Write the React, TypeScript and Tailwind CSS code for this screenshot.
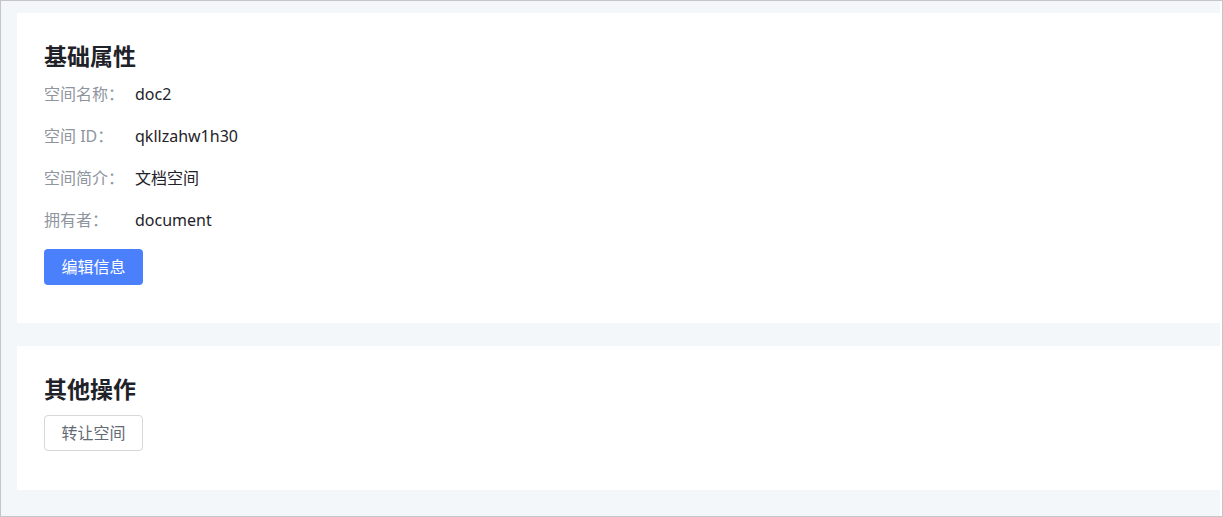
import React from "react";

type Row = { label: string; value: string };

const rows: Row[] = [
  { label: "空间名称：", value: "doc2" },
  { label: "空间 ID：", value: "qkllzahw1h30" },
  { label: "空间简介：", value: "文档空间" },
  { label: "拥有者：", value: "document" },
];

const FONT = { fontFamily: '"Noto Sans", "Noto Sans CJK SC", sans-serif' };

export default function App() {
  return (
    <div
      className="w-[1223px] h-[517px] border border-[#c6c6c6] bg-white flex overflow-hidden"
      style={FONT}
    >
      <div className="flex-1 bg-[#f4f7fa] pl-[16px] pt-[12px] flex flex-col gap-[23px]">
        {/* 基础属性 */}
        <section className="bg-white h-[310px] pl-[27px] pt-[28px]">
          <h2 className="text-[23px] leading-[30px] font-bold text-[#1f2329]">基础属性</h2>
          <div className="mt-[2px]">
            {rows.map((r) => (
              <div key={r.label} className="h-[42px] flex items-center text-[16px]">
                <span className="w-[91px] text-[#8f959e]">{r.label}</span>
                <span className="text-[#1f2329]">{r.value}</span>
              </div>
            ))}
          </div>
          <button className="mt-[8px] w-[99px] h-[36px] rounded-[4px] bg-[#4b80fd] text-white text-[16px]">
            编辑信息
          </button>
        </section>

        {/* 其他操作 */}
        <section className="bg-white h-[144px] pl-[27px] pt-[28px]">
          <h2 className="text-[23px] leading-[30px] font-bold text-[#1f2329]">其他操作</h2>
          <button className="mt-[11px] w-[99px] h-[36px] rounded-[4px] border border-[#d5d7da] bg-white text-[#646a73] text-[16px]">
            转让空间
          </button>
        </section>
      </div>
      <div className="w-[2px] bg-white" />
    </div>
  );
}
